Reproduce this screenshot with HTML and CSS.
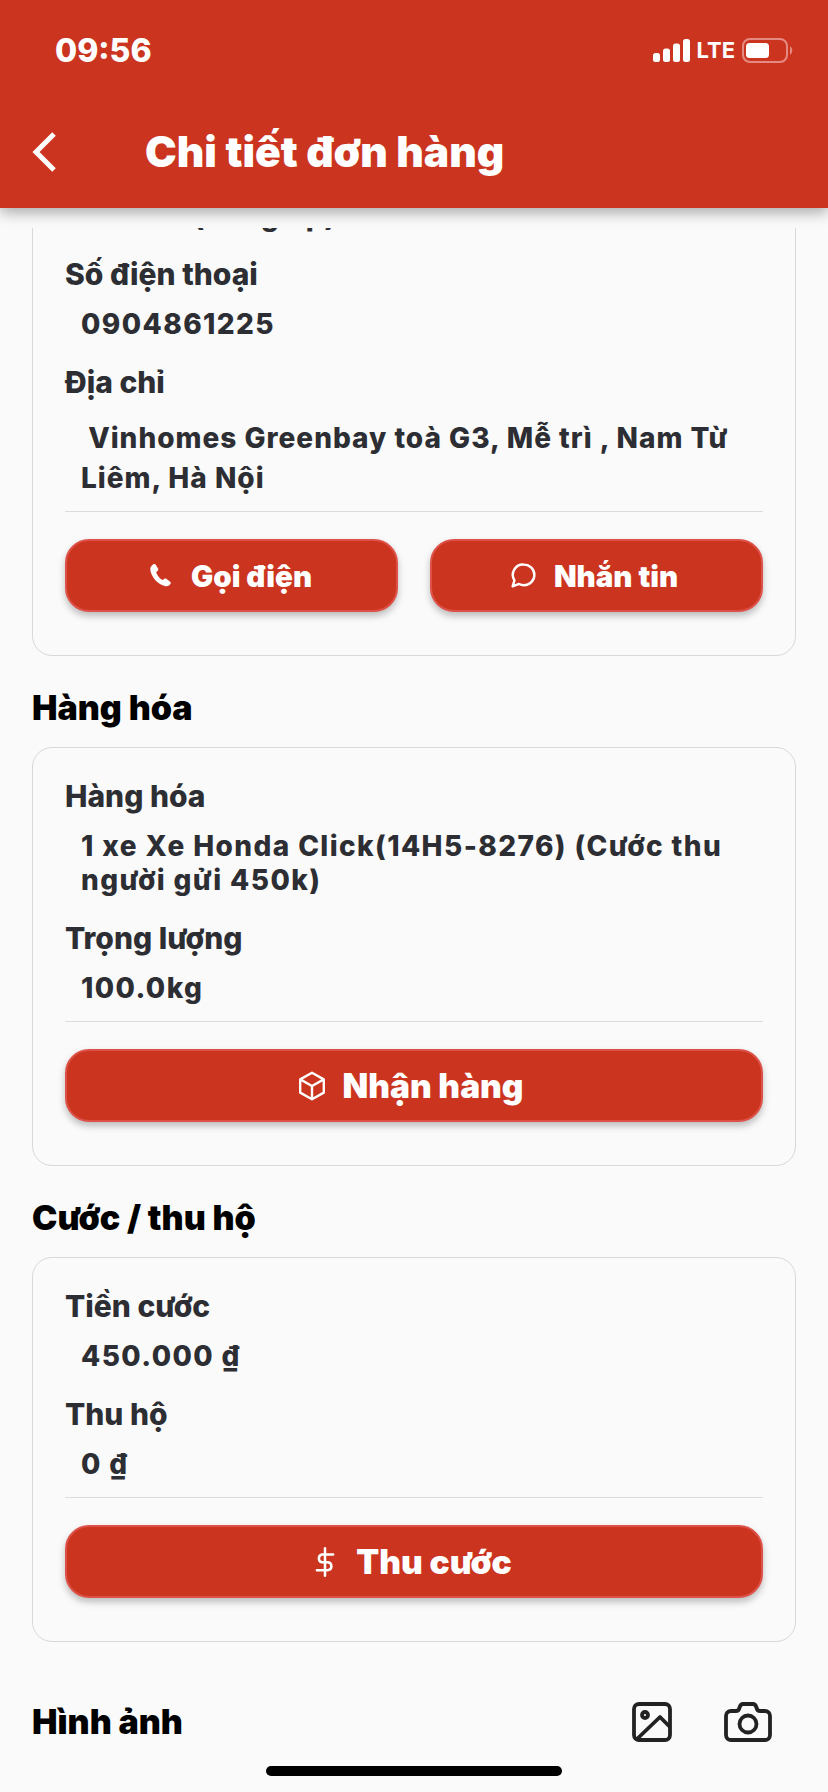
FILE: index.html
```html
<!DOCTYPE html>
<html lang="vi">
<head>
  <meta charset="UTF-8">
  <meta name="viewport" content="width=device-width, initial-scale=1.0">
  <title>Chi tiết đơn hàng</title>
  <link rel="stylesheet" href="styles.css">
</head>
<body>
  <div class="phone">
    <header class="app-header">
      <div class="status-bar">
        <span class="clock">09:56</span>
        <div class="status-icons">
          <svg width="37" height="23" viewBox="0 0 37 23" fill="#fff">
            <rect x="0" y="14" width="7" height="9" rx="2.500"/>
            <rect x="10" y="9.500" width="7" height="13.500" rx="2.500"/>
            <rect x="20" y="4.500" width="7" height="18.500" rx="2.500"/>
            <rect x="30" y="0" width="7" height="23" rx="2.500"/>
          </svg>
          <span class="network">LTE</span>
          <svg width="52" height="25" viewBox="0 0 52 25">
            <rect x="1" y="1" width="44" height="23" rx="7" fill="none" stroke="#e58a80" stroke-width="2"/>
            <rect x="4" y="5" width="23" height="15" rx="3.500" fill="#fff"/>
            <path d="M48 8.500c3 1 3 7 0 8z" fill="#e58a80"/>
          </svg>
        </div>
      </div>
      <div class="title-bar">
        <svg width="26" height="42" viewBox="0 0 26 42" fill="none" stroke="#fff" stroke-width="5">
          <path d="M22 3 L4 21 L22 39"/>
        </svg>
        <h1>Chi tiết đơn hàng</h1>
      </div>
    </header>

    <main class="content">
      <div class="scroll">
        <section class="card card-first">
          <p class="value">A Tuấn (Tăng ap)</p>
          <p class="label">Số điện thoại</p>
          <p class="value">0904861225</p>
          <p class="label">Địa chỉ</p>
          <p class="value value-address">&nbsp;Vinhomes Greenbay toà G3, Mễ trì , Nam Từ Liêm, Hà Nội</p>
          <hr>
          <div class="btn-row">
            <button class="btn">
              <svg width="30" height="30" viewBox="0 0 24 24" fill="#fff"><path d="M6.600 2.600c.7-.5 1.500-.3 2 .4l1.800 2.900c.4.6.3 1.300-.2 1.800l-1.300 1.200c.8 2.400 2.800 5 5.100 6.300l1.500-1c.6-.4 1.300-.3 1.800.1l2.800 2.200c.6.500.7 1.300.2 1.900-1 1.300-2.400 2.100-3.900 1.700C10.300 18.800 5 12.600 4.300 7.300 4 5.300 5 3.700 6.600 2.600z"/></svg>
              Gọi điện
            </button>
            <button class="btn">
              <svg width="29" height="29" viewBox="0 0 24 24" fill="none" stroke="#fff" stroke-width="2" stroke-linejoin="round"><path d="M12.500 3a8.500 8.500 0 0 1 0 17c-1.500 0-3-.4-4.200-1L3 21l1.500-5A8.500 8.500 0 0 1 12.500 3z"/></svg>
              Nhắn tin
            </button>
          </div>
        </section>

        <h2 class="section-title">Hàng hóa</h2>
        <section class="card">
          <p class="label">Hàng hóa</p>
          <p class="value">1 xe Xe Honda Click(14H5-8276) (Cước thu người gửi 450k)</p>
          <p class="label">Trọng lượng</p>
          <p class="value value-last">100.0kg</p>
          <hr>
          <button class="btn btn-big">
            <svg width="28" height="30" viewBox="2.500 2 19 20" fill="none" stroke="#fff" stroke-width="1.600" stroke-linejoin="round"><path d="M12 3l8 4.500v9L12 21l-8-4.500v-9zM4 7.500l8 4.500 8-4.500M12 12v9"/></svg>
            Nhận hàng
          </button>
        </section>

        <h2 class="section-title">Cước / thu hộ</h2>
        <section class="card">
          <p class="label">Tiền cước</p>
          <p class="value">450.000 ₫</p>
          <p class="label">Thu hộ</p>
          <p class="value value-last">0 ₫</p>
          <hr>
          <button class="btn btn-big">
            <svg width="30" height="30" viewBox="0 0 24 24" fill="none" stroke="#fff" stroke-width="2" stroke-linecap="round"><path d="M12 1v22M18.500 6H9.500a3.200 3.200 0 0 0 0 6.200h5a3.200 3.200 0 0 1 0 6.300H5.500"/></svg>
            Thu cước
          </button>
        </section>

        <div class="photo-head">
          <h2 class="section-title">Hình ảnh</h2>
          <div class="photo-actions">
            <svg width="40" height="40" viewBox="0 0 40 40" fill="none" stroke="#222" stroke-width="3.800" stroke-linejoin="round">
              <rect x="2" y="2" width="36" height="36" rx="5"/>
              <circle cx="13" cy="13" r="3"/>
              <path d="M5 37L28 15l10 10"/>
            </svg>
            <svg width="48" height="40" viewBox="0 0 48 40" fill="none" stroke="#222" stroke-width="3.800" stroke-linejoin="round">
              <path d="M7 9h5c1.500 0 2.500-.6 3-2l.7-2c.5-1.300 1.300-3 3.300-3h10c2 0 2.800 1.700 3.300 3l.7 2c.5 1.400 1.500 2 3 2h5c2.800 0 5 2.200 5 5v19c0 2.800-2.200 5-5 5H7c-2.800 0-5-2.200-5-5V14c0-2.800 2.200-5 5-5z"/>
              <circle cx="24" cy="22" r="8.500"/>
            </svg>
          </div>
        </div>
      </div>
    </main>

    <div class="home-bar"></div>
  </div>
</body>
</html>
```

FILE: styles.css
```css
* {
    box-sizing: border-box;
}
body {
    margin: 0;
    font-family: Inter, "Noto Sans", sans-serif;
    background: #fafafa;
}
.phone {
    position: relative;
    width: 828px;
    height: 1792px;
    overflow: hidden;
    display: flex;
    flex-direction: column;
}
.app-header {
    position: relative;
    z-index: 2;
    height: 208px;
    flex-shrink: 0;
    background: #cb351f;
    color: #fff;
    box-shadow: 0 4px 14px rgba(0, 0, 0, 0.35);
}
.status-bar {
    display: flex;
    justify-content: space-between;
    align-items: center;
    height: 75px;
    padding: 25px 34px 0 55px;
}
.clock {
    font-size: 32px;
    font-weight: 800;
}
.status-icons {
    display: flex;
    align-items: center;
    gap: 7px;
}
.network {
    font-size: 22px;
    font-weight: 700;
}
.title-bar {
    display: flex;
    align-items: center;
    gap: 87px;
    padding: 54px 0 0 32px;
}
.title-bar h1 {
    margin: 0;
    font-size: 42.5px;
    font-weight: 900;
    line-height: 46px;
}
.content {
    flex: 1;
    margin-top: 20px;
    overflow: hidden;
}
.scroll {
    padding: 0 32px;
}
.card {
    border: 1px solid #d8d8d8;
    border-radius: 20px;
    padding: 31px 32px 43px;
}
.card-first {
    margin-top: -77px;
}
.label {
    margin: 0;
    font-size: 30px;
    font-weight: 800;
    line-height: 34px;
    color: #2d2e33;
}
.value {
    margin: 16px 0 24px;
    padding-left: 16px;
    font-size: 28px;
    font-weight: 800;
    line-height: 34px;
    letter-spacing: 1.4px;
    color: #2d2e33;
}
.value-last {
    margin-bottom: 16px;
}
.value-address {
    margin: 19px 0 13px;
    line-height: 40px;
    letter-spacing: 1px;
}
hr {
    margin: 0 0 27px;
    border: none;
    border-top: 1px solid #dcdcdc;
}
.btn {
    display: flex;
    align-items: center;
    justify-content: center;
    gap: 16px;
    width: 100%;
    height: 73px;
    padding: 0 6px 0 0;
    border: 2px solid #dd5148;
    border-radius: 24px;
    background: #cb351f;
    color: #fff;
    font-family: inherit;
    font-size: 29.5px;
    font-weight: 900;
    box-shadow: 0 4px 7px rgba(0, 0, 0, 0.25);
}
.btn-big {
    font-size: 33.5px;
}
.btn-row {
    display: flex;
    gap: 32px;
}
.section-title {
    margin: 32px 0 19px;
    font-size: 34px;
    font-weight: 900;
    line-height: 40px;
    color: #000;
}
.photo-head {
    display: flex;
    justify-content: space-between;
    align-items: center;
    margin-top: 60px;
}
.photo-head .section-title {
    margin: 0;
}
.photo-actions {
    display: flex;
    gap: 52px;
    padding-right: 24px;
}
.home-bar {
    position: absolute;
    left: 266px;
    bottom: 16px;
    width: 296px;
    height: 10px;
    border-radius: 5px;
    background: #000;
}
```
